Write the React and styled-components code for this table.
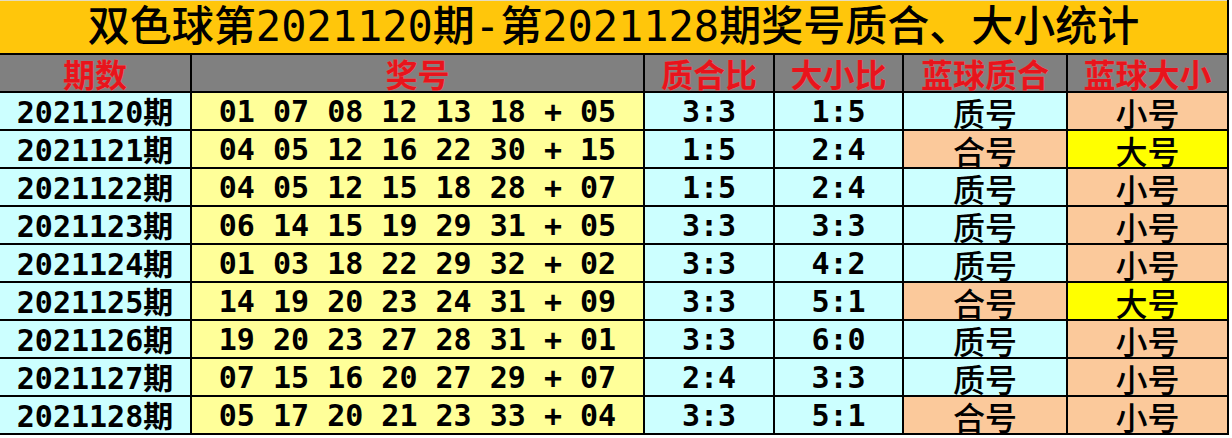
import React from "react";
import styled, { createGlobalStyle } from "styled-components";

const GlobalStyle = createGlobalStyle`
  html, body { margin: 0; padding: 0; background: #ffffff; }
  body { font-family: "DejaVu Sans Mono", "Noto Sans CJK SC", monospace; }
`;

const MIX = `"DejaVu Sans Mono", "Noto Sans CJK SC", monospace`;
const CJK = `"Noto Sans CJK SC", "Noto Sans", sans-serif`;

const Sheet = styled.div`
  display: grid;
  grid-template-columns: 190px 451px 128px 127px 162px 159px;
  grid-template-rows: 53px 36px repeat(9, 36px);
  gap: 2px;
  width: fit-content;
  background: #000;
  padding: 0 2px 2px 0;
`;

const TitleBar = styled.div`
  grid-column: 1 / -1;
  background: #ffc60b;
  border-top: 1px solid #e4dcc0;
  display: flex;
  align-items: center;
  justify-content: center;
  font-family: ${MIX};
  font-weight: 500;
  font-size: 42px;
  line-height: 1.15;
  color: #000;
  white-space: pre;
`;

const HeadCell = styled.div`
  background: #808080;
  display: flex;
  align-items: center;
  justify-content: center;
  font-family: ${CJK};
  font-weight: 700;
  font-size: 32px;
  line-height: 1.05;
  color: #e8141c;
  text-shadow: 0 0 1px #ff7070;
  padding-top: 1px;
`;

const TONES = {
  cyan: "#ccffff",
  yellow: "#ffff99",
  peach: "#fbc99b",
  gold: "#ffff00",
};

const Cell = styled.div`
  background: ${(p) => TONES[p.$tone] || TONES.cyan};
  display: flex;
  align-items: center;
  justify-content: center;
  color: #000;
  white-space: pre;
  line-height: 1.1;
`;

const PeriodCell = styled(Cell)`
  font-family: ${MIX};
  font-weight: 700;
  font-size: 30px;
  padding-top: 2px;
`;

const NumbersCell = styled(Cell)`
  font-family: ${MIX};
  font-weight: 700;
  font-size: 30px;
  padding-top: 1px;
`;

const RatioCell = styled(Cell)`
  font-family: ${MIX};
  font-weight: 700;
  font-size: 30px;
  padding-top: 1px;
`;

const TagCell = styled(Cell)`
  font-family: ${CJK};
  font-weight: 500;
  font-size: 32px;
  line-height: 1;
  padding-top: 2px;
`;

const rows = [
  ["2021120", "01 07 08 12 13 18 + 05", "3:3", "1:5", "质号", "小号"],
  ["2021121", "04 05 12 16 22 30 + 15", "1:5", "2:4", "合号", "大号"],
  ["2021122", "04 05 12 15 18 28 + 07", "1:5", "2:4", "质号", "小号"],
  ["2021123", "06 14 15 19 29 31 + 05", "3:3", "3:3", "质号", "小号"],
  ["2021124", "01 03 18 22 29 32 + 02", "3:3", "4:2", "质号", "小号"],
  ["2021125", "14 19 20 23 24 31 + 09", "3:3", "5:1", "合号", "大号"],
  ["2021126", "19 20 23 27 28 31 + 01", "3:3", "6:0", "质号", "小号"],
  ["2021127", "07 15 16 20 27 29 + 07", "2:4", "3:3", "质号", "小号"],
  ["2021128", "05 17 20 21 23 33 + 04", "3:3", "5:1", "合号", "小号"],
];

const headers = ["期数", "奖号", "质合比", "大小比", "蓝球质合", "蓝球大小"];

export default function App() {
  return (
    <>
      <GlobalStyle />
      <Sheet>
        <TitleBar>双色球第2021120期-第2021128期奖号质合、大小统计</TitleBar>
        {headers.map((h) => (
          <HeadCell key={h}>{h}</HeadCell>
        ))}
        {rows.map(([period, nums, zh, dx, blueZh, blueDx]) => (
          <React.Fragment key={period}>
            <PeriodCell $tone="cyan">{period}期</PeriodCell>
            <NumbersCell $tone="yellow">{nums}</NumbersCell>
            <RatioCell $tone="cyan">{zh}</RatioCell>
            <RatioCell $tone="cyan">{dx}</RatioCell>
            <TagCell $tone={blueZh === "合号" ? "peach" : "cyan"}>{blueZh}</TagCell>
            <TagCell $tone={blueDx === "大号" ? "gold" : "peach"}>{blueDx}</TagCell>
          </React.Fragment>
        ))}
      </Sheet>
    </>
  );
}
